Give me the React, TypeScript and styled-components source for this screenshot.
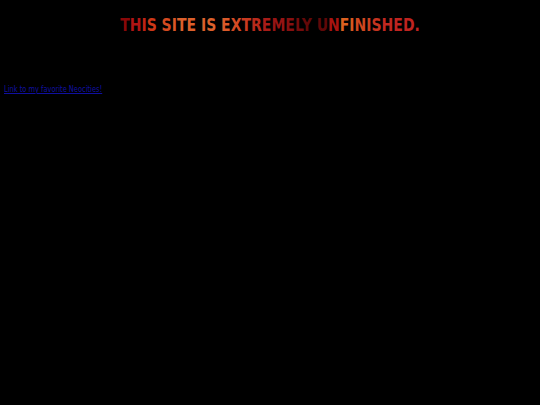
import React from "react";
import styled, { createGlobalStyle } from "styled-components";

const GlobalStyle = createGlobalStyle`
	html, body {
		margin: 0;
		padding: 0;
		background: #000000;
	}
	body {
		font-family: "DejaVu Sans", Verdana, sans-serif;
	}
`;

const Page = styled.div`
	min-height: 405px;
	padding: 0 4px;
	background: #000000;
`;

const Title = styled.h1`
	margin: 0;
	padding-top: 15px;
	text-align: center;
	font-size: 14px;
	font-weight: bold;
	line-height: 16px;
	letter-spacing: 0;
	transform: scaleY(1.25);
`;

const Letter = styled.span<{ $c: string }>`
	color: ${(p) => p.$c};
`;

const LinkRow = styled.p`
	margin: 52px 0 0;
	font-size: 9.5px;
	line-height: 12px;
`;

const NeoLink = styled.a`
	display: inline-block;
	color: #1010a0;
	text-decoration: underline;
	transform: scaleX(0.7);
	transform-origin: left center;
`;

const letters: [string, string][] = [
	["T", "#8a0808"],
	["H", "#b01414"],
	["I", "#c02414"],
	["S", "#cc3818"],
	[" ", "#000"],
	["S", "#d44a20"],
	["I", "#da5626"],
	["T", "#dc602c"],
	["E", "#dc602c"],
	[" ", "#000"],
	["I", "#dc602c"],
	["S", "#dc602c"],
	[" ", "#000"],
	["E", "#da5a2a"],
	["X", "#d44a24"],
	["T", "#c83a20"],
	["R", "#b82a1c"],
	["E", "#a81c18"],
	["M", "#961414"],
	["E", "#861010"],
	["L", "#740c0c"],
	["Y", "#640808"],
	[" ", "#000"],
	["U", "#600808"],
	["N", "#a81410"],
	["F", "#dc6020"],
	["I", "#d85820"],
	["N", "#d04820"],
	["I", "#cc4020"],
	["S", "#c43420"],
	["H", "#c02820"],
	["E", "#c02420"],
	["D", "#c02420"],
	[".", "#c02420"],
];

const App = () => {
	return (
		<Page>
			<GlobalStyle />
			<Title>
				{letters.map(([ch, c], i) => (
					<Letter key={i} $c={c}>
						{ch}
					</Letter>
				))}
			</Title>
			<LinkRow>
				<NeoLink href="#">Link to my favorite Neocities!</NeoLink>
			</LinkRow>
		</Page>
	);
};

export default App;
